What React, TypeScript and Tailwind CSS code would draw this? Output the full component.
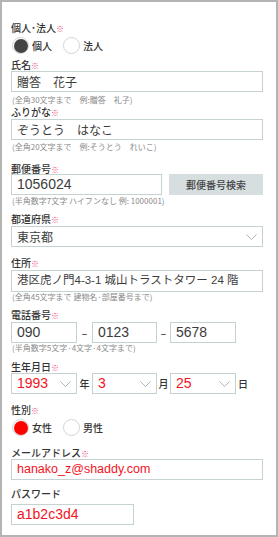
const jp = { fontFamily: '"Noto Sans CJK JP", "Noto Sans", sans-serif' };
const lat = { fontFamily: '"Liberation Sans", "Noto Sans CJK JP", sans-serif' };

function Label({ text, req = true, className = "" }: { text: string; req?: boolean; className?: string }) {
  return (
    <div className={`h-[10px] text-[10px] leading-[10px] font-medium text-[#333] ${className}`} style={jp}>
      {text}
      {req && <span className="text-[8px] font-normal text-[#e8507c]">※</span>}
    </div>
  );
}

function Hint({ text, className = "" }: { text: string; className?: string }) {
  return (
    <div className={`h-[8px] whitespace-nowrap text-[8px] leading-[8px] text-[#8a8a8a] ${className}`} style={jp}>
      {text}
    </div>
  );
}

function Field({
  value,
  className = "",
  red = false,
  font = lat,
}: {
  value: string;
  className?: string;
  red?: boolean;
  font?: React.CSSProperties;
}) {
  return (
    <div
      className={`flex items-center border border-[#c4d2d2] bg-white pl-[5px] whitespace-nowrap ${
        red ? "text-[#f2141e]" : "text-[#3c3c3c]"
      } ${className}`}
      style={font}
    >
      {value}
    </div>
  );
}

function Chevron({ className = "" }: { className?: string }) {
  return (
    <svg width="11" height="6" viewBox="0 0 11 6" className={className}>
      <polyline points="0.5,0.5 5.5,5.5 10.5,0.5" fill="none" stroke="#a9b6ba" strokeWidth="1" />
    </svg>
  );
}

function Select({ value, className = "", red = false }: { value: string; className?: string; red?: boolean }) {
  return (
    <div
      className={`flex items-center justify-between border border-[#c4d2d2] bg-white pl-[5px] pr-[5px] ${
        red ? "text-[14px] text-[#f2141e]" : "text-[12px] text-[#3c3c3c]"
      } ${className}`}
      style={red ? lat : jp}
    >
      <span>{value}</span>
      <Chevron />
    </div>
  );
}

function Radio({ label, checked, color }: { label: string; checked: boolean; color: string }) {
  return (
    <div className="flex items-center">
      <div className="flex h-[17px] w-[17px] items-center justify-center rounded-full border border-[#d2d6d6] bg-white">
        {checked && <div className="h-[14px] w-[14px] rounded-full" style={{ backgroundColor: color }} />}
      </div>
      <span className="ml-[3px] text-[10px] font-medium text-[#333]" style={jp}>
        {label}
      </span>
    </div>
  );
}

function Sep({ text, w }: { text: string; w: string }) {
  return (
    <div className={`flex ${w} items-center justify-center text-[10px] font-medium text-[#333]`} style={jp}>
      {text}
    </div>
  );
}

export default function App() {
  return (
    <div className="h-[537px] w-[278px] border-2 border-[#b4b4b4] bg-white pl-[9px] pr-[13px] pt-[21px]">
      <Label text="個人･法人" />
      <div className="mt-[4px] flex h-[17px] items-center gap-[11px] pl-[1px]">
        <Radio label="個人" checked color="#444" />
        <Radio label="法人" checked={false} color="#444" />
      </div>

      <Label text="氏名" className="mt-[6px]" />
      <Field value="贈答　花子" className="mt-[1px] h-[21px] text-[12px]" font={jp} />
      <Hint text="(全角30文字まで　例:贈答　礼子)" className="mt-[4px] pl-[1px]" />

      <Label text="ふりがな" className="mt-[3px]" />
      <Field value="ぞうとう　はなこ" className="mt-[2px] h-[21px] text-[12px]" font={jp} />
      <Hint text="(全角20文字まで　例:そうとう　れいこ)" className="mt-[3px] pl-[1px]" />

      <Label text="郵便番号" className="mt-[13px]" />
      <div className="mt-[0px] flex h-[21px] gap-[7px]">
        <Field value="1056024" className="h-[21px] w-[151px] text-[14px]" />
        <div
          className="flex flex-1 items-center justify-center bg-[#d6dee0] text-[10px] font-medium text-[#444]"
          style={jp}
        >
          郵便番号検索
        </div>
      </div>
      <Hint text="(半角数字7文字 ハイフンなし 例: 1000001)" className="mt-[2px] pl-[1px]" />

      <Label text="都道府県" className="mt-[9px]" />
      <Select value="東京都" className="mt-[2px] h-[21px]" />

      <Label text="住所" className="mt-[11px]" />
      <Field value="港区虎ノ門4-3-1 城山トラストタワー 24 階" className="mt-[2px] h-[22px] text-[11.5px]" />
      <Hint text="(全角45文字まで 建物名·部屋番号まで)" className="mt-[1px] pl-[1px]" />

      <Label text="電話番号" className="mt-[9px]" />
      <div className="mt-[2px] flex h-[21px] text-[14px]">
        <Field value="090" className="w-[66px]" />
        <Sep text="–" w="w-[15px]" />
        <Field value="0123" className="w-[65px]" />
        <Sep text="–" w="w-[13px]" />
        <Field value="5678" className="w-[66px]" />
      </div>
      <Hint text="(半角数字5文字·4文字·4文字まで)" className="mt-[1px] pl-[1px]" />

      <Label text="生年月日" className="mt-[10px]" />
      <div className="mt-[1px] flex h-[21px]">
        <Select value="1993" red className="w-[66px]" />
        <Sep text="年" w="w-[15px]" />
        <Select value="3" red className="w-[65px]" />
        <Sep text="月" w="w-[13px]" />
        <Select value="25" red className="w-[66px]" />
        <div className="flex items-center pl-[2px] text-[10px] font-medium text-[#333]" style={jp}>
          日
        </div>
      </div>

      <Label text="性別" className="mt-[11px]" />
      <div className="mt-[4px] flex h-[17px] items-center gap-[11px] pl-[1px]">
        <Radio label="女性" checked color="#ff0000" />
        <Radio label="男性" checked={false} color="#ff0000" />
      </div>

      <Label text="メールアドレス" className="mt-[12px]" />
      <Field value="hanako_z@shaddy.com" red className="mt-[1px] h-[21px] text-[12.5px]" />

      <Label text="パスワード" req={false} className="mt-[9px]" />
      <Field value="a1b2c3d4" red className="mt-[5px] h-[21px] w-[123px] text-[14px]" />
    </div>
  );
}
